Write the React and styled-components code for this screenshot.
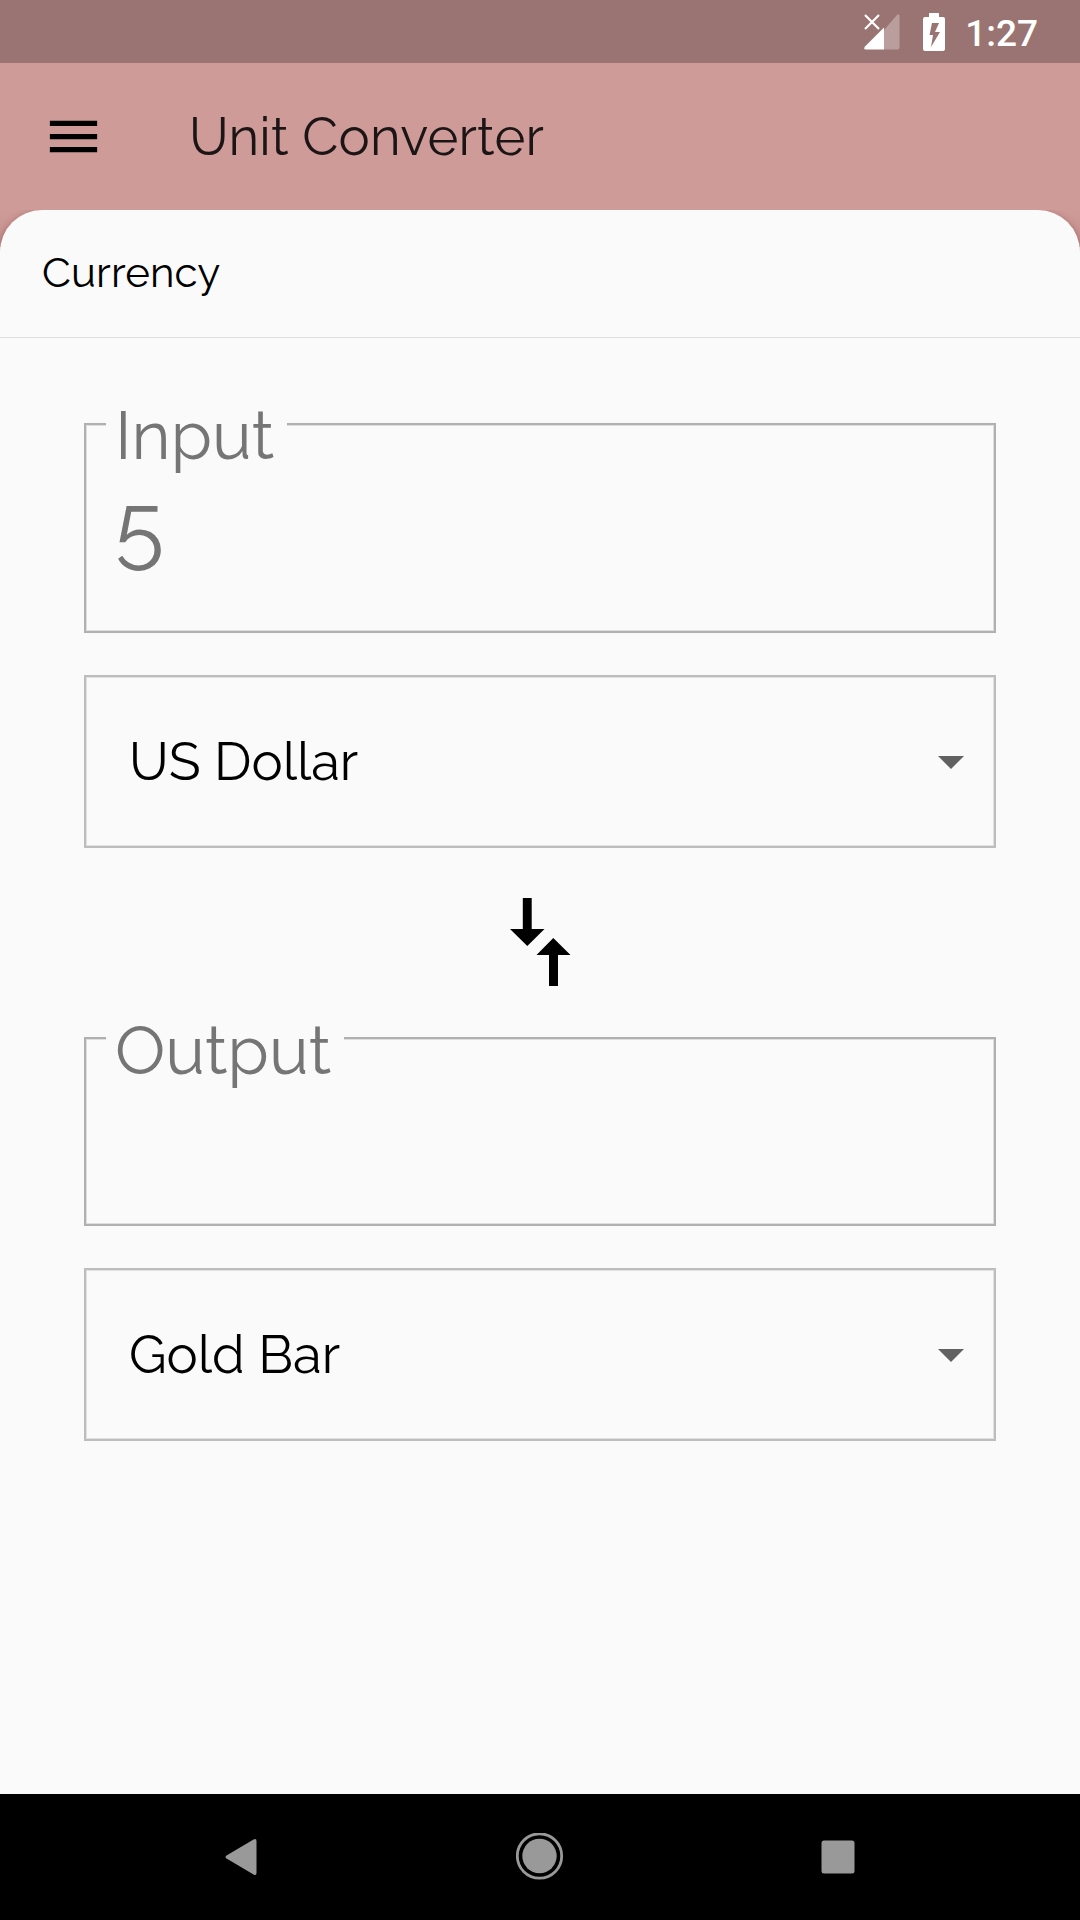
import React from "react";
import styled, { createGlobalStyle } from "styled-components";

const GlobalStyle = createGlobalStyle`
  * { box-sizing: border-box; }
  body { margin: 0; background: #fafafa; }
`;

const Screen = styled.div`
  display: flex;
  flex-direction: column;
  width: 1080px;
  height: 1920px;
  overflow: hidden;
  background: #ce9b99;
  font-family: Raleway, Lato, "Open Sans", sans-serif;
  color: #000;
`;

const StatusBar = styled.header`
  display: flex;
  flex: none;
  justify-content: flex-end;
  align-items: center;
  height: 63px;
  padding-right: 42px;
  background: #9a7472;
  svg { display: block; flex: none; }
`;

const Clock = styled.span`
  margin-left: 20px;
  font: 500 37px/63px Roboto, sans-serif;
  color: #fff;
  padding-top: 3px;
`;

const BatteryIcon = styled.svg`
  margin-left: 23px;
`;

const AppBar = styled.div`
  display: flex;
  flex: none;
  align-items: center;
  height: 147px;
  padding-left: 42px;
`;

const Text = styled.span`
  display: block;
  white-space: pre;
  font-size: ${(p) => p.$size}px;
  line-height: ${(p) => p.$line}px;
  font-weight: 400;
  letter-spacing: ${(p) => p.$spacing || 0}px;
  color: ${(p) => p.$color || "#000"};
`;

const Title = styled(Text)`
  margin: 0 0 0 84px;
`;

const Panel = styled.main`
  display: flex;
  flex: 1;
  flex-direction: column;
  background: #fafafa;
  border-radius: 42px 42px 0 0;
  box-shadow: 0 2px 7px rgba(80, 20, 20, 0.4);
  clip-path: inset(0);
`;

const PanelWrap = styled.div`
  display: flex;
  flex: 1;
  background: linear-gradient(#ce9b99, #c48f8d 37px, #fafafa 37px);
`;

const Category = styled.div`
  display: flex;
  align-items: center;
  height: 128px;
  padding: 0 0 2px 42px;
  border-bottom: 1px solid #dfdfdf;
`;

const Form = styled.div`
  display: flex;
  flex-direction: column;
  padding: 85px 84px 0;
`;

const Field = styled.div`
  position: relative;
  height: ${(p) => p.$height}px;
  padding: 50px 0 0 29px;
  border: 2px solid #b0b0b0;
  box-shadow: inset 0 0 0 1px #dedede;
`;

const FieldLabel = styled.label`
  position: absolute;
  left: 20px;
  top: ${(p) => p.$top}px;
  width: ${(p) => p.$width}px;
  height: 76px;
  padding-left: 9px;
  background: #fafafa;
`;

const Select = styled.div`
  display: flex;
  align-items: center;
  justify-content: space-between;
  height: 173px;
  margin-top: 42px;
  padding: 0 30px 0 43px;
  border: 2px solid #bdbdbd;
  box-shadow: inset 0 0 0 1px #e0e0e0;
`;

const SwapRow = styled.div`
  display: flex;
  justify-content: center;
  align-items: center;
  height: 189px;
  padding-bottom: 1px;
`;

const NavBar = styled.nav`
  display: flex;
  flex: none;
  justify-content: space-between;
  align-items: center;
  height: 126px;
  padding: 0 217px;
  background: #000;
  svg { display: block; }
`;

const Caret = () => (
  <svg width="26" height="15" viewBox="0 0 26 15">
    <path d="M0 2H26L13 15Z" fill="#616161" />
  </svg>
);

export default function App() {
  return (
    <Screen>
      <GlobalStyle />
      <StatusBar>
        <svg width="36" height="36" viewBox="0 0 36 36">
          <path d="M20 16L33 1Q35.500 -1 35.500 2V33Q35.500 35.500 33 35.500H20Z" fill="#b99e9d" />
          <path d="M20 13.500V35.500H2Q-1 35.500 1 32.500Z" fill="#fff" />
          <path d="M1 1L15 15M15 1L1 15" stroke="#fff" strokeWidth="2.200" />
        </svg>
        <BatteryIcon width="22" height="38" viewBox="0 0 22 38">
          <path
            fill="#fff"
            fillRule="evenodd"
            d="M6 0H16V4H20Q22 4 22 6V36Q22 38 20 38H2Q0 38 0 36V6Q0 4 2 4H6ZM9 10L6.500 22H10L8 34L17 19H12L16 10Z"
          />
        </BatteryIcon>
        <Clock>1:27</Clock>
      </StatusBar>
      <AppBar>
        <svg width="63" height="63" viewBox="0 0 24 24">
          <path d="M3 18h18v-2H3v2zm0-5h18v-2H3v2zm0-7v2h18V6H3z" />
        </svg>
        <Title as="h1" $size={52.5} $line={63} $color="#1c1515" $spacing={0.2}>
          Unit Converter
        </Title>
      </AppBar>
      <PanelWrap>
        <Panel>
          <Category>
            <Text $size={42} $line={50} $spacing={0.15}>Currency</Text>
          </Category>
          <Form>
            <Field $height={210}>
              <FieldLabel $width={181} $top={-27}>
                <Text $size={67} $line={76} $color="#757575">Input</Text>
              </FieldLabel>
              <Text $size={90} $line={102} $color="#757575">5</Text>
            </Field>
            <Select>
              <Text $size={52.5} $line={63}>US Dollar</Text>
              <Caret />
            </Select>
            <SwapRow>
              <svg width="61" height="88" viewBox="0 0 61 88">
                <path d="M12.800 0H21.700V31H34.500L17.300 48L0 31H12.800Z" />
                <path d="M43.300 40L60.500 57H48V88H39V57H26.500Z" />
              </svg>
            </SwapRow>
            <Field $height={189}>
              <FieldLabel $width={238} $top={-26}>
                <Text $size={67} $line={76} $color="#757575">Output</Text>
              </FieldLabel>
            </Field>
            <Select>
              <Text $size={52.5} $line={63}>Gold Bar</Text>
              <Caret />
            </Select>
          </Form>
        </Panel>
      </PanelWrap>
      <NavBar>
        <svg width="48" height="48" viewBox="0 0 48 48">
          <path d="M9.500 22.500L36.500 6.500Q39.500 5 39.500 8V40Q39.500 43 36.500 41.500L9.500 25.500Q7.500 24 9.500 22.500Z" fill="#999" />
        </svg>
        <svg width="48" height="48" viewBox="0 0 48 48">
          <circle cx="23.500" cy="23" r="22.200" fill="none" stroke="#999" strokeWidth="2.800" />
          <circle cx="23.500" cy="23" r="17.200" fill="#999" />
        </svg>
        <svg width="48" height="48" viewBox="0 0 48 48">
          <rect x="6.500" y="7.500" width="33" height="33" rx="2.500" fill="#999" />
        </svg>
      </NavBar>
    </Screen>
  );
}
